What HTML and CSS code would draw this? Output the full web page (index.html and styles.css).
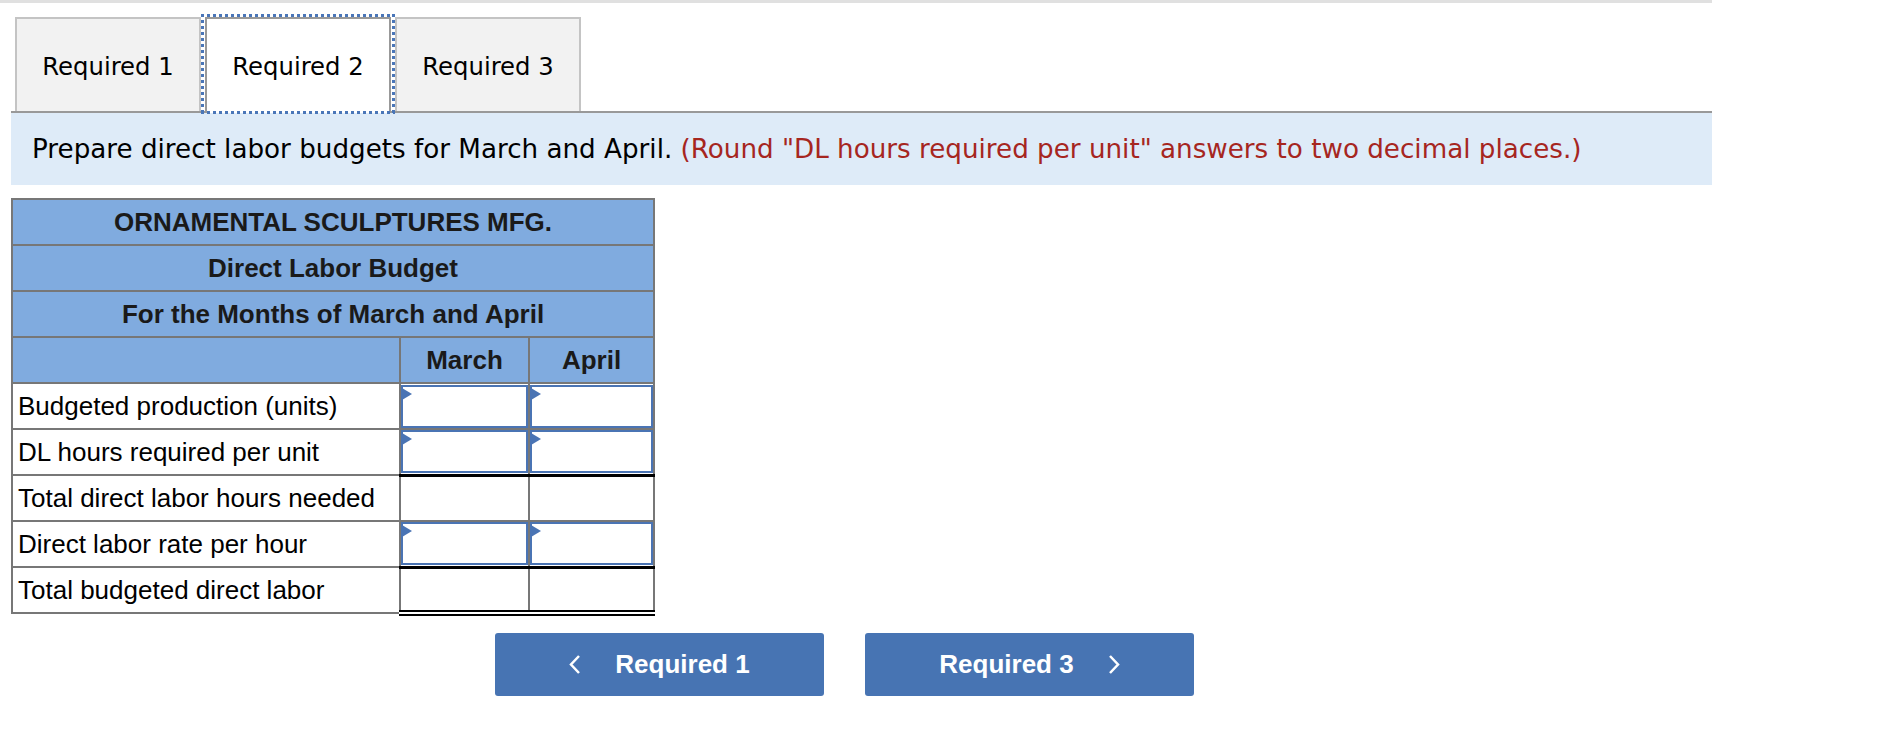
FILE: index.html
```html
<!DOCTYPE html>
<html>
<head>
<meta charset="utf-8">
<link rel="stylesheet" href="styles.css">
</head>
<body>
<div class="topbar"></div>
<div class="wrap">
  <div class="tabs">
    <div class="tab">Required 1</div>
    <div class="tab active">Required 2</div>
    <div class="tab">Required 3</div>
  </div>
  <div class="panel">
    <p class="instr">Prepare direct labor budgets for March and April. <span class="note">(Round "DL hours required per unit" answers to two decimal places.)</span></p>
  </div>
  <table class="budget">
    <tr class="hd"><td colspan="3">ORNAMENTAL SCULPTURES MFG.</td></tr>
    <tr class="hd"><td colspan="3">Direct Labor Budget</td></tr>
    <tr class="hd"><td colspan="3">For the Months of March and April</td></tr>
    <tr class="hd"><td class="lbl"></td><td class="col">March</td><td class="col">April</td></tr>
    <tr><td class="lbl">Budgeted production (units)</td><td class="val"><div class="inp"></div></td><td class="val"><div class="inp"></div></td></tr>
    <tr><td class="lbl">DL hours required per unit</td><td class="val under"><div class="inp"></div></td><td class="val under"><div class="inp"></div></td></tr>
    <tr><td class="lbl">Total direct labor hours needed</td><td class="val"></td><td class="val"></td></tr>
    <tr><td class="lbl">Direct labor rate per hour</td><td class="val under"><div class="inp"></div></td><td class="val under"><div class="inp"></div></td></tr>
    <tr><td class="lbl">Total budgeted direct labor</td><td class="val dbl"></td><td class="val dbl"></td></tr>
  </table>
  <div class="nav">
    <button class="btn"><svg class="chev" width="12" height="19" viewBox="0 0 12 19"><polyline points="10,1 2,9.5 10,18" fill="none" stroke="#fff" stroke-width="2.5"/></svg><span>Required 1</span></button>
    <button class="btn"><span>Required 3</span><svg class="chev" width="12" height="19" viewBox="0 0 12 19"><polyline points="2,1 10,9.5 2,18" fill="none" stroke="#fff" stroke-width="2.5"/></svg></button>
  </div>
</div>
</body>
</html>
```
FILE: styles.css
```css
html, body {
  margin: 0;
  padding: 0;
  background: #fff;
}
body {
  font-family: "Liberation Sans", Arial, sans-serif;
  color: #000;
}
.topbar {
  width: 1712px;
  height: 3px;
  background: #e0e0e0;
}
.wrap {
  margin-left: 11px;
  width: 1701px;
}
.tabs {
  display: flex;
  align-items: flex-end;
  gap: 4px;
  padding-left: 4px;
  margin-top: 14px;
  border-bottom: 2px solid #999;
  height: 94px;
}
.tab {
  box-sizing: border-box;
  width: 186px;
  height: 94px;
  border: 2px solid #c4c4c4;
  border-bottom: none;
  background: #f2f2f2;
  font-family: "DejaVu Sans", Verdana, sans-serif;
  font-size: 24.3px;
  display: flex;
  align-items: center;
  justify-content: center;
  padding-top: 3px;
}
.tab.active {
  position: relative;
  background: #fff;
  border-color: #999;
  height: 96px;
  margin-bottom: -2px;
  padding-bottom: 2px;
}
.tab.active::after {
  content: "";
  position: absolute;
  left: -6px;
  right: -6px;
  top: -5px;
  bottom: -1px;
  background:
    repeating-linear-gradient(90deg, #4a76b8 0 3px, transparent 3px 6px) left top / 100% 3px no-repeat,
    repeating-linear-gradient(90deg, #4a76b8 0 3px, transparent 3px 6px) left bottom / 100% 3px no-repeat,
    repeating-linear-gradient(180deg, #4a76b8 0 3px, transparent 3px 6px) left top / 3px 100% no-repeat,
    repeating-linear-gradient(180deg, #4a76b8 0 3px, transparent 3px 6px) right top / 3px 100% no-repeat;
}
.panel {
  background: #deebf8;
  height: 72px;
  display: flex;
  align-items: center;
  padding-left: 21px;
  font-family: "DejaVu Sans", Verdana, sans-serif;
  font-size: 26.2px;
}
.instr {
  margin: 0;
  white-space: nowrap;
}
.note {
  color: #a6261f;
}
.budget {
  margin-top: 13px;
  border-collapse: collapse;
  border: 2px solid #777;
  font-size: 26px;
}
.budget td {
  border: 2px solid #777;
  height: 46px;
  padding: 0;
  box-sizing: border-box;
}
.hd td {
  background: #80abdf;
  font-weight: bold;
  text-align: center;
  color: #1a1a1a;
}
.budget .lbl {
  width: 388px;
  padding-left: 5px;
}
.budget .val,
.budget .col {
  width: 129px;
}
.budget .col:last-child,
.budget .val:last-child {
  width: 125px;
}
.budget .val {
  padding: 0;
  vertical-align: middle;
}
.budget .val.under {
  border-bottom: 3px solid #000;
}
.budget .val.dbl {
  border-bottom: 6px double #000;
}
.inp {
  position: relative;
  box-sizing: border-box;
  height: 43px;
  border: 2px solid #4a74b4;
  margin: 0;
}
.inp::before {
  content: "";
  position: absolute;
  left: -1px;
  top: 1px;
  border-top: 6px solid transparent;
  border-bottom: 6px solid transparent;
  border-left: 10px solid #4a74b4;
}
.nav {
  display: flex;
  gap: 41px;
  margin-top: 17px;
  padding-left: 484px;
}
.btn {
  width: 329px;
  height: 63px;
  background: #4774b3;
  border: none;
  border-radius: 3px;
  color: #fff;
  font-family: "Liberation Sans", Arial, sans-serif;
  font-weight: bold;
  font-size: 26px;
  display: flex;
  align-items: center;
  justify-content: center;
  gap: 34px;
  padding: 0;
}
.chev {
  display: block;
}
```
